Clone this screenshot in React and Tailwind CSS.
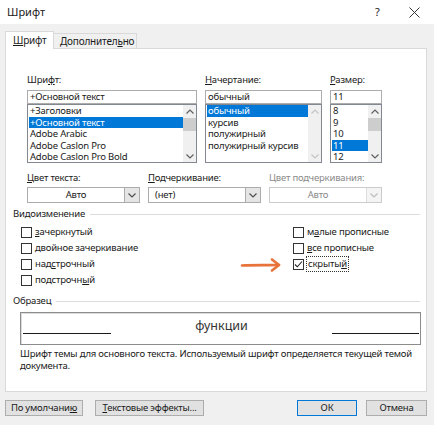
import React from 'react'

const font = { fontFamily: '"Noto Sans", "Liberation Sans", sans-serif' }

function Chevron({ dir = 'down', color = '#606060' }) {
  const d = dir === 'down' ? 'M1.5 3.5l3.5 3.5 3.5-3.5' : 'M1.5 6.5l3.5-3.5 3.5 3.5'
  return (
    <svg width="10" height="10" viewBox="0 0 10 10" fill="none">
      <path d={d} stroke={color} strokeWidth="1.2" />
    </svg>
  )
}

function ScrollBar({ disabled, thumb }) {
  const c = disabled ? '#c4c4c4' : '#606060'
  return (
    <div className="w-[13px] flex flex-col items-center bg-[#f0f0f0] shrink-0">
      <div className="h-[13px] flex items-center justify-center"><Chevron dir="up" color={c} /></div>
      {thumb && <div className="w-[13px] h-[13px] bg-[#cdcdcd]" />}
      <div className="flex-1" />
      <div className="h-[13px] flex items-center justify-center"><Chevron dir="down" color={c} /></div>
    </div>
  )
}

function ListBox({ items, selected, width, thumb, disabled }) {
  return (
    <div className={`h-[59px] border border-[#828790] bg-white flex overflow-hidden ${width}`}>
      <div className="flex-1 pl-px min-w-0">
        {items.map((it, i) => (
          <div
            key={it}
            className={`h-[11.5px] leading-[11.5px] pl-px whitespace-nowrap ${i === selected ? 'bg-[#0078d7] text-white' : ''}`}
          >
            {it}
          </div>
        ))}
      </div>
      <ScrollBar disabled={disabled} thumb={thumb} />
    </div>
  )
}

function Select({ value, center, disabled }) {
  return (
    <div className={`h-[16px] w-[113px] border flex ${disabled ? 'border-[#cccccc] bg-white' : 'border-[#acacac] bg-white'}`}>
      <div className={`flex-1 flex items-center ${center ? 'justify-center' : 'pl-[6px]'} ${disabled ? 'text-[#8a8a8a]' : ''}`}>{value}</div>
      <div className={`w-[15px] flex items-center justify-center border-l ${disabled ? 'border-[#dddddd] bg-[#f4f4f4]' : 'border-[#acacac] bg-[#e5e5e5]'}`}>
        <Chevron color={disabled ? '#bdbdbd' : '#505050'} />
      </div>
    </div>
  )
}

function Check({ label, checked, focus }) {
  return (
    <div className="h-[16px] flex items-center gap-[3px]">
      <div className="w-[11px] h-[11px] border border-[#333333] bg-white flex items-center justify-center">
        {checked && (
          <svg width="9" height="9" viewBox="0 0 9 9" fill="none">
            <path d="M1 4.5l2.3 2.3L8 1.5" stroke="#222" strokeWidth="1.1" />
          </svg>
        )}
      </div>
      <span className={focus ? 'outline outline-1 outline-dotted outline-[#333] px-px' : ''}>{label}</span>
    </div>
  )
}

function GroupTitle({ children }) {
  return (
    <div className="flex items-center gap-[5px] h-[12px]">
      <span>{children}</span>
      <div className="flex-1 h-px bg-[#dcdcdc]" />
    </div>
  )
}

export default function App() {
  return (
    <div className="w-[434px] h-[425px] bg-[#f0f0f0] flex flex-col text-[9.5px] tracking-[-0.2px] text-[#1a1a1a]" style={font}>
      {/* Title bar */}
      <div className="h-[24px] bg-white flex items-center pl-[7px] shrink-0 tracking-normal">
        <span className="text-[11px]">Шрифт</span>
        <div className="flex-1" />
        <span className="text-[11px] w-[10px] mr-[24px]">?</span>
        <svg width="11" height="11" viewBox="0 0 11 11" className="mr-[14px]">
          <path d="M0.5 0.5l10 10M10.5 0.5l-10 10" stroke="#333" strokeWidth="1" />
        </svg>
      </div>

      {/* Tabs */}
      <div className="flex items-end pl-[5px] mt-[7px] h-[17px] shrink-0 text-[10px]">
        <div className="relative z-10 -mb-px w-[49px] h-[18px] bg-white border border-b-0 border-[#d9d9d9] flex items-center pl-[7px]">
          <span><u>Ш</u>рифт</span>
        </div>
        <div className="w-[83px] h-[15px] border border-b-0 border-l-0 border-[#d9d9d9] flex items-center pl-[6px]">
          <span>Дополнител<u>ь</u>но</span>
        </div>
      </div>

      {/* Panel */}
      <div className="mx-[5px] w-[422px] h-[344px] bg-white border border-[#d9d9d9] shrink-0 flex flex-col">
        {/* Fonts */}
        <div className="flex gap-[8px] pl-[21px] pt-[25px]">
          <div className="flex flex-col">
            <div className="h-[12px] leading-[12px] mb-[4px]">Шри<u>ф</u>т:</div>
            <div className="w-[170px] h-[14px] border border-[#acacac] flex items-center pl-[2px]">+Основной текст</div>
            <ListBox
              width="w-[170px]"
              items={['+Заголовки', '+Основной текст', 'Adobe Arabic', 'Adobe Caslon Pro', 'Adobe Caslon Pro Bold']}
              selected={1}
              thumb
            />
          </div>
          <div className="flex flex-col">
            <div className="h-[12px] leading-[12px] mb-[4px]"><u>Н</u>ачертание:</div>
            <div className="w-[117px] h-[14px] border border-[#acacac] flex items-center pl-[2px]">обычный</div>
            <ListBox
              width="w-[117px]"
              items={['обычный', 'курсив', 'полужирный', 'полужирный курсив']}
              selected={0}
              disabled
            />
          </div>
          <div className="flex flex-col">
            <div className="h-[12px] leading-[12px] mb-[4px]"><u>Р</u>азмер:</div>
            <div className="w-[52px] h-[14px] border border-[#acacac] flex items-center pl-[2px]">11</div>
            <ListBox width="w-[52px]" items={['8', '9', '10', '11', '12']} selected={3} thumb />
          </div>
        </div>

        {/* Colour / underline */}
        <div className="flex gap-[8px] pl-[21px] mt-[9px]">
          <div className="flex flex-col">
            <div className="h-[12px] leading-[12px] mb-[3px]"><u>Ц</u>вет текста:</div>
            <Select value="Авто" center />
          </div>
          <div className="flex flex-col">
            <div className="h-[12px] leading-[12px] mb-[3px]"><u>П</u>одчеркивание:</div>
            <Select value="(нет)" />
          </div>
          <div className="flex flex-col">
            <div className="h-[12px] leading-[12px] mb-[3px] text-[#8a8a8a]">Цвет подчеркивания:</div>
            <Select value="Авто" center disabled />
          </div>
        </div>

        {/* Effects */}
        <div className="pl-[7px] pr-[6px] mt-[5px]">
          <GroupTitle>Видоизменение</GroupTitle>
        </div>
        <div className="flex pl-[15px] mt-[4px]">
          <div className="flex flex-col w-[272px]">
            <Check label={<><u>з</u>ачеркнутый</>} />
            <Check label="двойное зачеркивание" />
            <Check label={<>над<u>с</u>трочный</>} />
            <Check label={<>подстрочн<u>ы</u>й</>} />
          </div>
          <div className="flex flex-col">
            <Check label={<>м<u>а</u>лые прописные</>} />
            <Check label={<><u>в</u>се прописные</>} />
            <div className="relative">
              <svg className="absolute left-[-53px] top-[1px]" width="44" height="16" viewBox="0 0 44 16" fill="none">
                <path d="M2 8.5C14 8 26 8.3 39 8" stroke="#e8733a" strokeWidth="2.6" strokeLinecap="round" />
                <path d="M32 2.5l7 5.5-7 5.5" stroke="#e8733a" strokeWidth="2.6" strokeLinecap="round" strokeLinejoin="round" />
              </svg>
              <Check label={<>скрыты<u>й</u></>} checked focus />
            </div>
          </div>
        </div>

        {/* Sample */}
        <div className="pl-[7px] pr-[6px] mt-[7px]">
          <GroupTitle>Образец</GroupTitle>
        </div>
        <div className="ml-[14px] mt-[5px] w-[401px] h-[33px] border border-[#8c8c8c] shadow-[inset_1px_1px_0_#dcdcdc] flex items-center">
          <div className="w-[88px] h-px bg-[#1a1a1a] ml-[2px] mt-[9px]" />
          <div className="flex-1 text-center text-[12.5px] tracking-normal text-[#333] -mt-[4px]">функции</div>
          <div className="w-[87px] h-px bg-[#1a1a1a] mr-px mt-[9px]" />
        </div>
        <div className="ml-[14px] mt-[3px] leading-[12px] whitespace-nowrap">
          Шрифт темы для основного текста. Используемый шрифт определяется текущей темой
          <br />
          документа.
        </div>
      </div>

      {/* Buttons */}
      <div className="flex items-center pl-[5px] mt-[8px]">
        <div className="w-[78px] h-[16px] border border-[#adadad] bg-[#e1e1e1] flex items-center justify-center">
          По умолчани<u>ю</u>
        </div>
        <div className="ml-[12px] w-[109px] h-[16px] border border-[#adadad] bg-[#e1e1e1] flex items-center justify-center">
          <span><u>Т</u>екстовые эффекты...</span>
        </div>
        <div className="ml-[93px] w-[60px] h-[16px] border border-[#0078d7] bg-[#e1e1e1] flex items-center justify-center">
          ОК
        </div>
        <div className="ml-[9px] w-[61px] h-[16px] border border-[#adadad] bg-[#e1e1e1] flex items-center justify-center">
          Отмена
        </div>
      </div>
    </div>
  )
}
